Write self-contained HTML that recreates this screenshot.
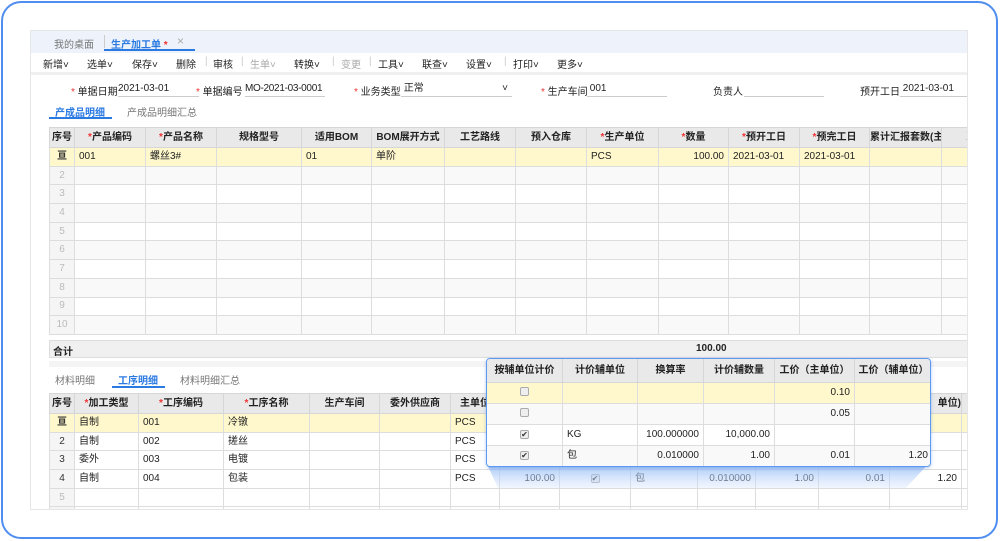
<!DOCTYPE html>
<html><head><meta charset="utf-8"><style>
*{box-sizing:border-box;margin:0;padding:0}
body{width:1000px;height:541px;background:#fff;position:relative;overflow:hidden;font-family:"Liberation Sans","Noto Sans CJK SC",sans-serif;font-size:10px;color:#222}
.frame{position:absolute;left:1px;top:1px;width:997px;height:538px;border:2px solid #4f8ef0;border-radius:20px}
.panel{position:absolute;left:30px;top:30px;width:938px;height:480px;background:#fff;overflow:hidden;border:1px solid #e6e6e6}
.abs{position:absolute;white-space:nowrap}
.tabbar{position:absolute;left:0;top:0;width:938px;height:22px;background:#eef3fb}
.tool{position:absolute;left:0;top:22px;width:938px;height:22px;background:#fff;border-bottom:3px solid #f0f0f0}
.red{color:#e33}
table{border-collapse:collapse;table-layout:fixed;position:absolute}
td{border:1px solid #ddd;height:18.7px;padding:0 4px;white-space:nowrap;overflow:hidden;font-size:10px;line-height:12px}
th{border:1px solid #d6d6d6;background:#e9e9e9;height:20px;font-weight:bold;font-size:10px;white-space:nowrap;overflow:hidden;line-height:12px}
tr.y td{background:#fff8cc}
tr.g td{background:#f9f9f9}
td.n{text-align:center;color:#bbb;background:#f5f5f5!important}
td.nn{text-align:center;color:#333;background:#f5f5f5}
.r{text-align:right}
.ul{position:absolute;border-bottom:1px solid #ccc;height:15px;line-height:14px;white-space:nowrap}
.cb{display:inline-block;width:9px;height:9px;border:1px solid #aaa;border-radius:2px;background:#eee;font-size:8px;line-height:8px;text-align:center;color:#333}
</style></head><body>
<div class="frame"></div>
<div class="panel">
 <div class="tabbar">
  <span class="abs" style="left:23px;top:5px;color:#777">我的桌面</span>
  <span class="abs" style="left:73px;top:4px;width:1px;height:13px;background:#ccc"></span>
  <span class="abs" style="left:80px;top:5px;color:#2a7ae2;font-weight:bold">生产加工单 <span class="red">*</span></span>
  <span class="abs" style="left:146px;top:3px;color:#aaa;font-size:12px">×</span>
  <span class="abs" style="left:73px;top:18px;width:91px;height:2px;background:#2a7ae2"></span>
 </div>
 <div class="tool">
  <span class="abs" style="left:12px;top:3px">新增˅</span>
  <span class="abs" style="left:56px;top:3px">选单˅</span>
  <span class="abs" style="left:101px;top:3px">保存˅</span>
  <span class="abs" style="left:145px;top:3px">删除</span><span class="abs" style="left:174px;top:3px;color:#ccc">|</span>
  <span class="abs" style="left:182px;top:3px">审核</span><span class="abs" style="left:210px;top:3px;color:#ccc">|</span>
  <span class="abs" style="left:219px;top:3px;color:#aaa">生单˅</span>
  <span class="abs" style="left:263px;top:3px">转换˅</span><span class="abs" style="left:301px;top:3px;color:#ccc">|</span>
  <span class="abs" style="left:310px;top:3px;color:#aaa">变更</span><span class="abs" style="left:338px;top:3px;color:#ccc">|</span>
  <span class="abs" style="left:347px;top:3px">工具˅</span>
  <span class="abs" style="left:391px;top:3px">联查˅</span>
  <span class="abs" style="left:435px;top:3px">设置˅</span><span class="abs" style="left:473px;top:3px;color:#ccc">|</span>
  <span class="abs" style="left:482px;top:3px">打印˅</span>
  <span class="abs" style="left:526px;top:3px">更多˅</span>
 </div>
 <span class="abs" style="left:40px;top:52px"><span class="red">*</span> 单据日期</span>
 <div class="ul" style="left:87px;top:51px;width:81px">2021-03-01</div>
 <span class="abs" style="left:165px;top:52px"><span class="red">*</span> 单据编号</span>
 <div class="ul" style="left:214px;top:51px;width:80px;letter-spacing:-0.3px">MO-2021-03-0001</div>
 <span class="abs" style="left:323px;top:52px"><span class="red">*</span> 业务类型</span>
 <div class="ul" style="left:370px;top:51px;width:111px">&nbsp;正常<span style="position:absolute;right:4px">˅</span></div>
 <span class="abs" style="left:510px;top:52px"><span class="red">*</span> 生产车间</span>
 <div class="ul" style="left:556px;top:51px;width:80px">&nbsp;001</div>
 <span class="abs" style="left:682px;top:52px">负责人</span>
 <div class="ul" style="left:713px;top:51px;width:80px"></div>
 <span class="abs" style="left:829px;top:52px">预开工日</span>
 <div class="ul" style="left:869px;top:51px;width:70px">&nbsp;2021-03-01</div>

 <span class="abs" style="left:24px;top:73px;color:#2a7ae2;font-weight:bold">产成品明细</span>
 <span class="abs" style="left:18px;top:86px;width:63px;height:2px;background:#2a7ae2"></span>
 <span class="abs" style="left:96px;top:73px;color:#777">产成品明细汇总</span>

 <table style="left:18px;top:96px;width:952px">
  <colgroup><col style="width:25px"><col style="width:71px"><col style="width:71px"><col style="width:85px"><col style="width:70px"><col style="width:73px"><col style="width:71px"><col style="width:71px"><col style="width:72px"><col style="width:70px"><col style="width:71px"><col style="width:70px"><col style="width:72px"><col style="width:60px"></colgroup>
  <tr><th>序号</th><th><span class="red">*</span>产品编码</th><th><span class="red">*</span>产品名称</th><th>规格型号</th><th>适用BOM</th><th>BOM展开方式</th><th>工艺路线</th><th>预入仓库</th><th><span class="red">*</span>生产单位</th><th><span class="red">*</span>数量</th><th><span class="red">*</span>预开工日</th><th><span class="red">*</span>预完工日</th><th>累计汇报套数(主)</th><th>现</th></tr>
  <tr class="y"><td class="nn" style="font-weight:bold">亘</td><td>001</td><td>螺丝3#</td><td></td><td>01</td><td>单阶</td><td></td><td></td><td>PCS</td><td class="r">100.00</td><td>2021-03-01</td><td>2021-03-01</td><td></td><td></td></tr>
  <tr class="g"><td class="n">2</td><td></td><td></td><td></td><td></td><td></td><td></td><td></td><td></td><td></td><td></td><td></td><td></td><td></td></tr>
  <tr><td class="n">3</td><td></td><td></td><td></td><td></td><td></td><td></td><td></td><td></td><td></td><td></td><td></td><td></td><td></td></tr>
  <tr class="g"><td class="n">4</td><td></td><td></td><td></td><td></td><td></td><td></td><td></td><td></td><td></td><td></td><td></td><td></td><td></td></tr>
  <tr><td class="n">5</td><td></td><td></td><td></td><td></td><td></td><td></td><td></td><td></td><td></td><td></td><td></td><td></td><td></td></tr>
  <tr class="g"><td class="n">6</td><td></td><td></td><td></td><td></td><td></td><td></td><td></td><td></td><td></td><td></td><td></td><td></td><td></td></tr>
  <tr><td class="n">7</td><td></td><td></td><td></td><td></td><td></td><td></td><td></td><td></td><td></td><td></td><td></td><td></td><td></td></tr>
  <tr class="g"><td class="n">8</td><td></td><td></td><td></td><td></td><td></td><td></td><td></td><td></td><td></td><td></td><td></td><td></td><td></td></tr>
  <tr><td class="n">9</td><td></td><td></td><td></td><td></td><td></td><td></td><td></td><td></td><td></td><td></td><td></td><td></td><td></td></tr>
  <tr class="g"><td class="n">10</td><td></td><td></td><td></td><td></td><td></td><td></td><td></td><td></td><td></td><td></td><td></td><td></td><td></td></tr>
 </table>
 <div class="abs" style="left:18px;top:309px;width:920px;height:18px;background:#f0f0f0;border:1px solid #ddd;font-weight:bold;padding:2px 3px">合计<span style="position:absolute;left:646px">100.00</span></div>
 <div class="abs" style="left:18px;top:330px;width:920px;height:6px;background:#f4f4f4"></div>

 <span class="abs" style="left:24px;top:341px;color:#777">材料明细</span>
 <span class="abs" style="left:87px;top:341px;color:#2a7ae2;font-weight:bold">工序明细</span>
 <span class="abs" style="left:81px;top:355px;width:53px;height:2px;background:#2a7ae2"></span>
 <span class="abs" style="left:149px;top:341px;color:#777">材料明细汇总</span>

 <table style="left:18px;top:362px;width:1005px">
  <colgroup><col style="width:25px"><col style="width:64px"><col style="width:85px"><col style="width:86px"><col style="width:70px"><col style="width:71px"><col style="width:49px"><col style="width:60px"><col style="width:71px"><col style="width:67px"><col style="width:58px"><col style="width:63px"><col style="width:71px"><col style="width:72px"><col style="width:93px"></colgroup>
  <tr><th>序号</th><th><span class="red">*</span>加工类型</th><th><span class="red">*</span>工序编码</th><th><span class="red">*</span>工序名称</th><th>生产车间</th><th>委外供应商</th><th>主单位</th><th></th><th></th><th></th><th></th><th></th><th></th><th style="text-align:right">单位)</th><th></th></tr>
  <tr class="y"><td class="nn" style="font-weight:bold">亘</td><td>自制</td><td>001</td><td>冷镦</td><td></td><td></td><td>PCS</td><td></td><td></td><td></td><td></td><td></td><td></td><td></td><td></td></tr>
  <tr><td class="nn">2</td><td>自制</td><td>002</td><td>搓丝</td><td></td><td></td><td>PCS</td><td></td><td></td><td></td><td></td><td></td><td></td><td></td><td></td></tr>
  <tr><td class="nn">3</td><td>委外</td><td>003</td><td>电镀</td><td></td><td></td><td>PCS</td><td></td><td></td><td></td><td></td><td></td><td></td><td></td><td></td></tr>
  <tr><td class="nn">4</td><td>自制</td><td>004</td><td>包装</td><td></td><td></td><td>PCS</td><td class="r">100.00</td><td style="text-align:center"><span class="cb">✔</span></td><td>包</td><td class="r">0.010000</td><td class="r">1.00</td><td class="r">0.01</td><td class="r">1.20</td><td></td></tr>
  <tr><td class="n">5</td><td></td><td></td><td></td><td></td><td></td><td></td><td></td><td></td><td></td><td></td><td></td><td></td><td></td><td></td></tr>
  <tr><td class="n"></td><td></td><td></td><td></td><td></td><td></td><td></td><td></td><td></td><td></td><td></td><td></td><td></td><td></td><td></td></tr>
 </table>
</div>

<svg class="abs" style="left:486px;top:462px" width="446" height="28"><defs><linearGradient id="g" x1="0" y1="0" x2="0" y2="1"><stop offset="0" stop-color="#8cb8f4" stop-opacity=".9"/><stop offset="1" stop-color="#cfe0fb" stop-opacity=".3"/></linearGradient></defs><polygon points="0,0 444,0 420,26 12,26" fill="url(#g)"/></svg>
<div class="abs" style="left:486px;top:358px;width:445px;height:109px;border:1px solid #5b9af0;border-radius:4px;background:#fff;overflow:hidden;box-shadow:0 1px 3px rgba(60,120,220,.4)">
 <table style="left:-1px;top:-1px;width:446px">
  <colgroup><col style="width:76px"><col style="width:75px"><col style="width:66px"><col style="width:71px"><col style="width:80px"><col style="width:78px"></colgroup>
  <tr><th style="height:24px">按辅单位计价</th><th>计价辅单位</th><th>换算率</th><th>计价辅数量</th><th>工价（主单位）</th><th>工价（辅单位）</th></tr>
  <tr class="y"><td style="height:21px;text-align:center"><span class="cb"></span></td><td></td><td></td><td></td><td class="r">0.10</td><td></td></tr>
  <tr class="g"><td style="height:21px;text-align:center"><span class="cb"></span></td><td></td><td></td><td></td><td class="r">0.05</td><td></td></tr>
  <tr><td style="height:21px;text-align:center"><span class="cb">✔</span></td><td>KG</td><td class="r">100.000000</td><td class="r">10,000.00</td><td></td><td></td></tr>
  <tr class="g"><td style="height:21px;text-align:center"><span class="cb">✔</span></td><td>包</td><td class="r">0.010000</td><td class="r">1.00</td><td class="r">0.01</td><td class="r">1.20</td></tr>
 </table>
</div>
</body></html>
